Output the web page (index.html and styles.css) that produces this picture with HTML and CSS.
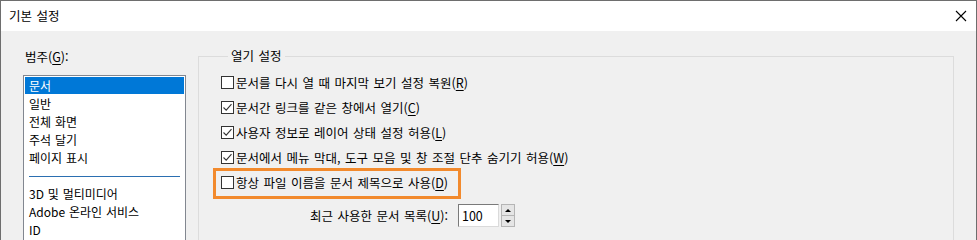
FILE: index.html
```html
<!DOCTYPE html>
<html lang="ko">
<head>
<meta charset="utf-8">
<title>기본 설정</title>
<link rel="stylesheet" href="styles.css">
</head>
<body>
<div class="window">
  <div class="titlebar">
    <span class="title">기본 설정</span>
    <svg class="close" width="12" height="12" viewBox="0 0 12 12"><path d="M1 1 L11 11 M11 1 L1 11" stroke="#000" stroke-width="1.1" fill="none"/></svg>
  </div>
  <div class="content">
    <div class="leftcol">
      <div class="catlabel">범주(<u>G</u>):</div>
      <div class="listbox">
        <div class="item selected">문서</div>
        <div class="item">일반</div>
        <div class="item">전체 화면</div>
        <div class="item">주석 달기</div>
        <div class="item">페이지 표시</div>
        <div class="sep"><span></span></div>
        <div class="item">3D 및 멀티미디어</div>
        <div class="item">Adobe 온라인 서비스</div>
        <div class="item">ID</div>
      </div>
    </div>
    <fieldset class="group">
      <legend>열기 설정</legend>
      <div class="row"><span class="cb"></span><span class="lbl">문서를 다시 열 때 마지막 보기 설정 복원(<u>R</u>)</span></div>
      <div class="row"><span class="cb"><svg width="11" height="11" viewBox="0 0 11 11"><path d="M1.5 5.5 L4.2 8.2 L9.5 2.2" stroke="#333" stroke-width="1.1" fill="none"/></svg></span><span class="lbl">문서간 링크를 같은 창에서 열기(<u>C</u>)</span></div>
      <div class="row"><span class="cb"><svg width="11" height="11" viewBox="0 0 11 11"><path d="M1.5 5.5 L4.2 8.2 L9.5 2.2" stroke="#333" stroke-width="1.1" fill="none"/></svg></span><span class="lbl">사용자 정보로 레이어 상태 설정 허용(<u>L</u>)</span></div>
      <div class="row"><span class="cb"><svg width="11" height="11" viewBox="0 0 11 11"><path d="M1.5 5.5 L4.2 8.2 L9.5 2.2" stroke="#333" stroke-width="1.1" fill="none"/></svg></span><span class="lbl">문서에서 메뉴 막대, 도구 모음 및 창 조절 단추 숨기기 허용(<u>W</u>)</span></div>
      <div class="row highlighted"><span class="cb"></span><span class="lbl">항상 파일 이름을 문서 제목으로 사용(<u>D</u>)</span><span class="mark"></span></div>
      <div class="recent">
        <span class="rlabel">최근 사용한 문서 목록(<u>U</u>):</span>
        <span class="numbox">100</span>
        <span class="spin"><span class="up"></span><span class="down"></span></span>
      </div>
    </fieldset>
  </div>
</div>
</body>
</html>
```

FILE: styles.css
```css
html, body {
  margin: 0;
  padding: 0;
  background: #f0f0f0;
}
body {
  font-family: "Noto Sans CJK KR", "Noto Sans", sans-serif;
  font-size: 12px;
  color: #000;
}
.window {
  width: 977px;
  height: 240px;
  box-sizing: border-box;
  border: 1px solid #6e6e6e;
  border-bottom: none;
  background: #f0f0f0;
  overflow: hidden;
}
.titlebar {
  height: 30px;
  background: #fff;
  display: flex;
  align-items: center;
  justify-content: space-between;
  padding: 0 9px 0 8px;
}
.title {
  line-height: 16px;
  font-size: 12.5px;
  word-spacing: 1px;
}
.close {
  display: block;
}
.content {
  display: flex;
  align-items: flex-start;
  padding: 17px 22px 0 22px;
  gap: 12px;
}
.leftcol {
  width: 163px;
  padding-top: 1px;
  flex: none;
}
.catlabel {
  line-height: 16px;
  padding-left: 2px;
  margin-bottom: 10px;
  font-size: 12.5px;
}
u {
  text-decoration: underline;
  text-underline-offset: 2px;
}
.listbox {
  border: 1px solid #828790;
  background: #fff;
  padding: 1px;
  height: 200px;
}
.item {
  height: 18px;
  line-height: 18px;
  padding-left: 4px;
  white-space: nowrap;
  word-spacing: 0.5px;
}
.item.selected {
  background: #0078d7;
  color: #fff;
  height: 17px;
  line-height: 17px;
  margin-bottom: 1px;
}
.sep {
  height: 18px;
  display: flex;
  align-items: center;
  padding: 0 4px;
}
.sep span {
  flex: 1;
  height: 1px;
  background: #2b6fb1;
}
.group {
  flex: 1;
  margin: 0;
  padding: 6px 0 20px 22px;
  border: 1px solid #dcdcdc;
  min-width: 0;
  font-size: 12.5px;
  word-spacing: 1px;
}
.group legend {
  margin-left: 7px;
  padding: 0 3px;
  line-height: 16px;
}
.row {
  position: relative;
  height: 25px;
  display: flex;
  align-items: center;
  white-space: nowrap;
}
.cb {
  width: 11px;
  height: 11px;
  border: 1px solid #333;
  background: #fff;
  display: inline-flex;
  flex: none;
  margin-right: 2px;
}
.cb svg {
  display: block;
}
.mark {
  position: absolute;
  left: -8px;
  top: -2px;
  width: 248px;
  height: 31px;
  box-sizing: border-box;
  border: 3px solid #f28a2d;
}
.recent {
  display: flex;
  align-items: center;
  margin-top: 9px;
  padding-left: 89px;
  height: 23px;
}
.rlabel {
  margin-right: 10px;
  white-space: nowrap;
}
.numbox {
  width: 36px;
  height: 21px;
  background: #fff;
  border: 1px solid;
  border-color: #7a7a7a #dadada #dadada #7a7a7a;
  padding-left: 3px;
  line-height: 21px;
  word-spacing: 0;
}
.spin {
  margin-left: 2px;
  width: 14px;
  height: 23px;
  display: flex;
  flex-direction: column;
  box-sizing: border-box;
  border: 1px solid #b5b5b5;
  background: #e5e5e5;
}
.spin .up, .spin .down {
  flex: 1;
  display: flex;
  align-items: center;
  justify-content: center;
}
.spin .up {
  border-bottom: 1px solid #b5b5b5;
}
.spin .up::after {
  content: "";
  border-left: 3px solid transparent;
  border-right: 3px solid transparent;
  border-bottom: 3px solid #000;
}
.spin .down::after {
  content: "";
  border-left: 3px solid transparent;
  border-right: 3px solid transparent;
  border-top: 3px solid #000;
}
```
